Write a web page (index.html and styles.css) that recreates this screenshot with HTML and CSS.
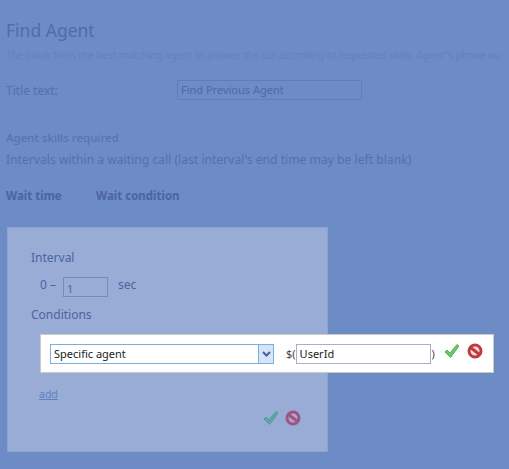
FILE: index.html
```html
<!DOCTYPE html>
<html lang="en">
  <head>
    <meta charset="UTF-8" />
    <meta name="viewport" content="width=device-width, initial-scale=1.0" />
    <title>Find Agent</title>
    <link rel="stylesheet" href="styles.css">
  </head>
  <body>
    <div class="block-form">
      <h1>Find Agent</h1>
      <p class="hint">The block finds the best matching agent to answer the call according to requested skills. Agent''s phone nu</p>
      <div class="title-row">
        <label>Title text:</label>
        <input type="text" class="title-input" value="Find Previous Agent" />
      </div>
      <h2>Agent skills required</h2>
      <p class="intervals">Intervals within a waiting call (last interval's end time may be left blank)</p>
      <div class="table-head">
        <span class="col-time">Wait time</span>
        <span>Wait condition</span>
      </div>
    </div>

    <div class="dialog">
      <div class="dialog-label">Interval</div>
      <div class="interval-row">
        <span class="interval-text">0 &ndash;</span>
        <input type="text" class="sec-input" value="1" />
        <span class="interval-text sec">sec</span>
      </div>
      <div class="dialog-label">Conditions</div>

      <div class="condition">
        <div class="select">
          <span class="select-text">Specific agent</span>
          <span class="select-btn">
            <svg width="9" height="6" viewBox="0 0 9 6"><path d="M1 1l3.5 3.5L8 1" fill="none" stroke="#4a5f96" stroke-width="2" /></svg>
          </span>
        </div>
        <span class="dollar">$(</span>
        <input type="text" class="var-input" value="UserId" />
        <span class="paren">)</span>
        <svg class="icon-ok" width="16" height="16" viewBox="0 0 16 16"><path d="M1 9L3 7L6 10L13 1.5L15 3L6.5 14.5Z" fill="#6cc864" stroke="#58b158" stroke-width="1" stroke-linejoin="round" /></svg>
        <svg class="icon-no" width="16" height="16" viewBox="0 0 16 16"><circle cx="8" cy="8" r="6" fill="#f4dcdc" stroke="#c03a40" stroke-width="3" /><path d="M3.5 4.5l9 7" stroke="#c03a40" stroke-width="3" /></svg>
      </div>

      <a class="add-link" href="#">add</a>
      <div class="dialog-actions">
        <svg width="16" height="16" viewBox="0 0 16 16"><path d="M1 9L3 7L6 10L13 1.5L15 3L6.5 14.5Z" fill="#5fa8a0" stroke="#4f9a98" stroke-width="1" stroke-linejoin="round" /></svg>
        <svg width="16" height="16" viewBox="0 0 16 16"><circle cx="8" cy="8" r="6" fill="#b0a8c8" stroke="#9c5588" stroke-width="3" /><path d="M3.5 4.5l9 7" stroke="#9c5588" stroke-width="3" /></svg>
      </div>
    </div>
  </body>
</html>
```

FILE: styles.css
```css
html {
  background: #6d8bc4;
}

body {
  margin: 0;
  width: 509px;
  height: 469px;
  overflow: hidden;
  font-family: "Noto Sans", "Open Sans", sans-serif;
  font-size: 12px;
  color: #4b64a2;
}

.block-form {
  padding: 20px 6px 0;
  height: 207px;
  box-sizing: border-box;
}

h1 {
  margin: 0;
  font-size: 17.5px;
  line-height: 20px;
  font-weight: normal;
  color: #506cab;
}

.hint {
  margin: 10px 0 0;
  font-size: 9.9px;
  line-height: 10px;
  white-space: nowrap;
  color: #6481bd;
}

.title-row {
  display: flex;
  align-items: center;
  margin-top: 20px;
}

.title-row label {
  width: 171px;
  font-size: 12px;
  color: #5470ae;
}

input {
  font-family: inherit;
  font-size: 11px;
  background: transparent;
  box-sizing: border-box;
  outline: none;
}

.title-input {
  width: 185px;
  height: 20px;
  padding: 0 3px 2px;
  border: 1px solid #5f7db8;
  color: #4f69a8;
}

h2 {
  margin: 30px 0 0;
  font-size: 11.5px;
  line-height: 16px;
  font-weight: 500;
  color: #5873b3;
}

.intervals {
  margin: 6px 0 0;
  font-size: 12.15px;
  line-height: 16px;
  color: #5470ae;
}

.table-head {
  display: flex;
  margin-top: 20px;
  font-size: 11.5px;
  line-height: 16px;
  font-weight: bold;
  color: #4b64a2;
}

.col-time {
  width: 90px;
}

.dialog {
  margin: 20px 0 0 7px;
  width: 321px;
  height: 225px;
  box-sizing: border-box;
  padding: 22px 0 0 23px;
  background: #98acd6;
  border: 1px solid #8ea4d0;
}

.dialog-label {
  font-size: 12px;
  line-height: 16px;
}

.interval-row {
  display: flex;
  align-items: flex-start;
  height: 20px;
  margin: 11px 0 10px 9px;
}

.interval-text {
  line-height: 16px;
}

.sec-input {
  width: 45px;
  height: 20px;
  margin-left: 7px;
  padding: 2px 3px 0;
  border: 1px solid #6f8bc2;
  color: #4b64a2;
}

.sec {
  margin-left: 10px;
}

.condition {
  display: flex;
  align-items: center;
  width: 454px;
  height: 39px;
  box-sizing: border-box;
  margin: 11px 0 0 9px;
  padding-left: 9px;
  background: #fff;
  border: 1px solid #c9c9c9;
  color: #222;
  font-size: 11px;
}

.select {
  display: flex;
  width: 224px;
  height: 20px;
  box-sizing: border-box;
  border: 1px solid #7eaedb;
}

.select-text {
  flex: 1;
  padding-left: 3px;
  line-height: 18px;
}

.select-btn {
  display: flex;
  align-items: center;
  justify-content: center;
  width: 14px;
  background: #d3e5fb;
  border-left: 1px solid #7eaedb;
}

.dollar {
  margin-left: 12px;
  color: #444;
}

.var-input {
  width: 135px;
  height: 20px;
  padding: 0 3px;
  border: 1px solid #abadc9;
  color: #222;
}

.paren {
  margin-left: 1px;
  color: #444;
}

.icon-ok {
  margin: 0 0 6px 9px;
}

.icon-no {
  margin: 0 0 6px 7px;
}

.add-link {
  display: block;
  margin: 14px 0 0 8px;
  font-size: 10.5px;
  line-height: 14px;
  color: #5f80bd;
}

.dialog-actions {
  display: flex;
  justify-content: flex-end;
  gap: 6px;
  margin: 9px 26px 0 0;
}
```
